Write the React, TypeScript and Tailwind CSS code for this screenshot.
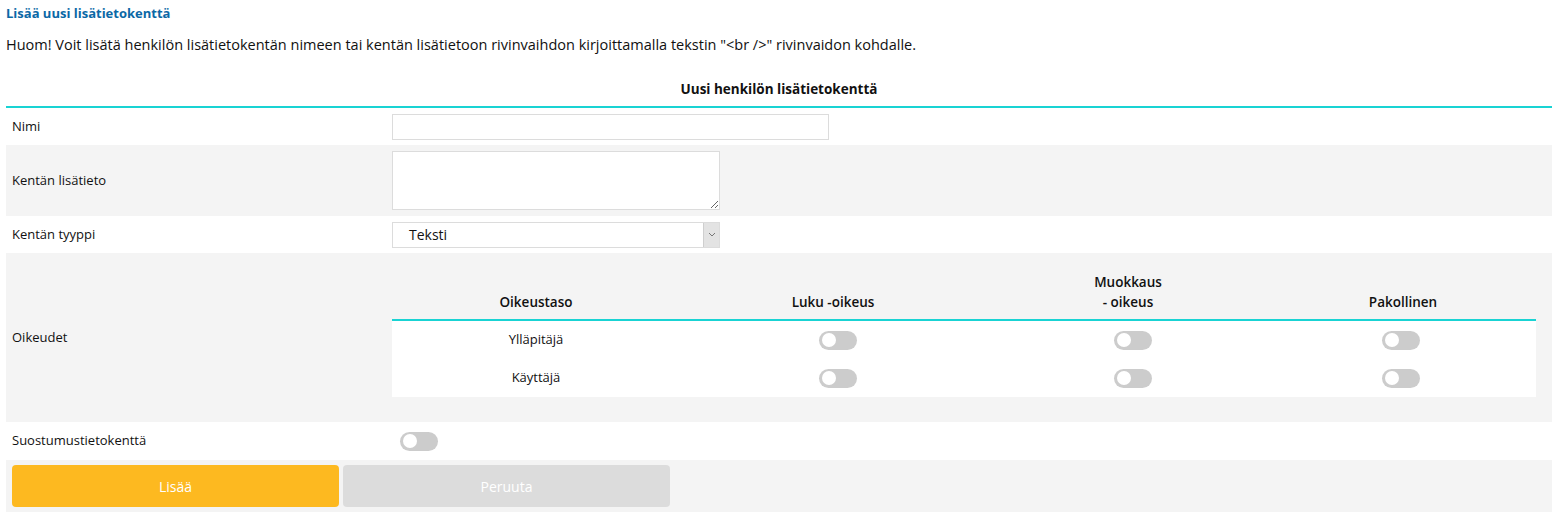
import React from 'react';

const Toggle: React.FC = () => (
  <span className="inline-flex items-center w-[38px] h-[19px] rounded-full bg-[#cccccc] px-[3px]">
    <span className="w-[14px] h-[14px] rounded-full bg-white" />
  </span>
);

const App: React.FC = () => {
  const rows = ['Ylläpitäjä', 'Käyttäjä'];

  return (
    <div className="w-[1552px] h-[519px] bg-white text-[#111] font-['Open_Sans',sans-serif] text-[13px]">
      <h2 className="px-[6px] pt-[4px] text-[13px] font-bold text-[#0b68a6] leading-[18px]">Lisää uusi lisätietokenttä</h2>
      <p className="px-[6px] mt-[13px] text-[14.5px] leading-[20px]">
        Huom! Voit lisätä henkilön lisätietokentän nimeen tai kentän lisätietoon rivinvaihdon kirjoittamalla tekstin "&lt;br /&gt;" rivinvaidon kohdalle.
      </p>

      <div className="ml-[6px] mt-[17px]">
        {/* Header */}
        <div className="h-[36px] flex items-center justify-center font-bold text-[13.5px] border-b-2 border-[#19d3d3]">
          Uusi henkilön lisätietokenttä
        </div>

        {/* Nimi */}
        <div className="flex items-center h-[37px]">
          <div className="w-[386px] pl-[6px]">Nimi</div>
          <input className="w-[437px] h-[26px] border border-[#dcdcdc] bg-white outline-none" />
        </div>

        {/* Kentän lisätieto */}
        <div className="flex items-center h-[71px] bg-[#f4f4f4]">
          <div className="w-[386px] pl-[6px]">Kentän lisätieto</div>
          <textarea className="w-[328px] h-[59px] border border-[#dcdcdc] bg-white outline-none resize-y" />
        </div>

        {/* Kentän tyyppi */}
        <div className="flex items-center h-[37px]">
          <div className="w-[386px] pl-[6px]">Kentän tyyppi</div>
          <div className="w-[328px] h-[26px] border border-[#dcdcdc] bg-white flex items-center">
            <span className="flex-1 pl-[16px] text-[14px]">Teksti</span>
            <span className="w-[16px] h-full bg-[#e3e3e3] border-l border-[#cfcfcf] flex items-center justify-center">
              <svg width="8" height="5" viewBox="0 0 8 5"><path d="M1 1l3 3 3-3" fill="none" stroke="#777" strokeWidth="1" /></svg>
            </span>
          </div>
        </div>

        {/* Oikeudet */}
        <div className="flex items-center h-[169px] bg-[#f4f4f4]">
          <div className="w-[386px] pl-[6px]">Oikeudet</div>
          <div className="w-[1144px] self-start pt-[16px]">
            <div className="grid grid-cols-[288px_306px_284px_1fr] h-[52px] items-end pb-[7px] font-semibold text-[13.5px] text-center border-b-2 border-[#19d3d3] leading-[20px]">
              <div>Oikeustaso</div>
              <div>Luku -oikeus</div>
              <div>Muokkaus<br />- oikeus</div>
              <div>Pakollinen</div>
            </div>
            <div className="bg-white">
              {rows.map((r) => (
                <div key={r} className="grid grid-cols-[288px_306px_284px_1fr] h-[38px] items-center text-center">
                  <div>{r}</div>
                  <div className="flex justify-center pl-[10px]"><Toggle /></div>
                  <div className="flex justify-center pl-[10px]"><Toggle /></div>
                  <div className="flex justify-center pr-[4px]"><Toggle /></div>
                </div>
              ))}
            </div>
          </div>
        </div>

        {/* Suostumus */}
        <div className="flex items-center h-[38px]">
          <div className="w-[394px] pl-[6px]">Suostumustietokenttä</div>
          <Toggle />
        </div>

        {/* Buttons */}
        <div className="flex items-center gap-[4px] h-[52px] bg-[#f4f4f4] px-[6px]">
          <button className="w-[327px] h-[42px] rounded-[4px] bg-[#fdb920] text-white text-[14px]">Lisää</button>
          <button className="w-[327px] h-[42px] rounded-[4px] bg-[#dcdcdc] text-white text-[14px]">Peruuta</button>
        </div>
      </div>
    </div>
  );
};

export default App;
